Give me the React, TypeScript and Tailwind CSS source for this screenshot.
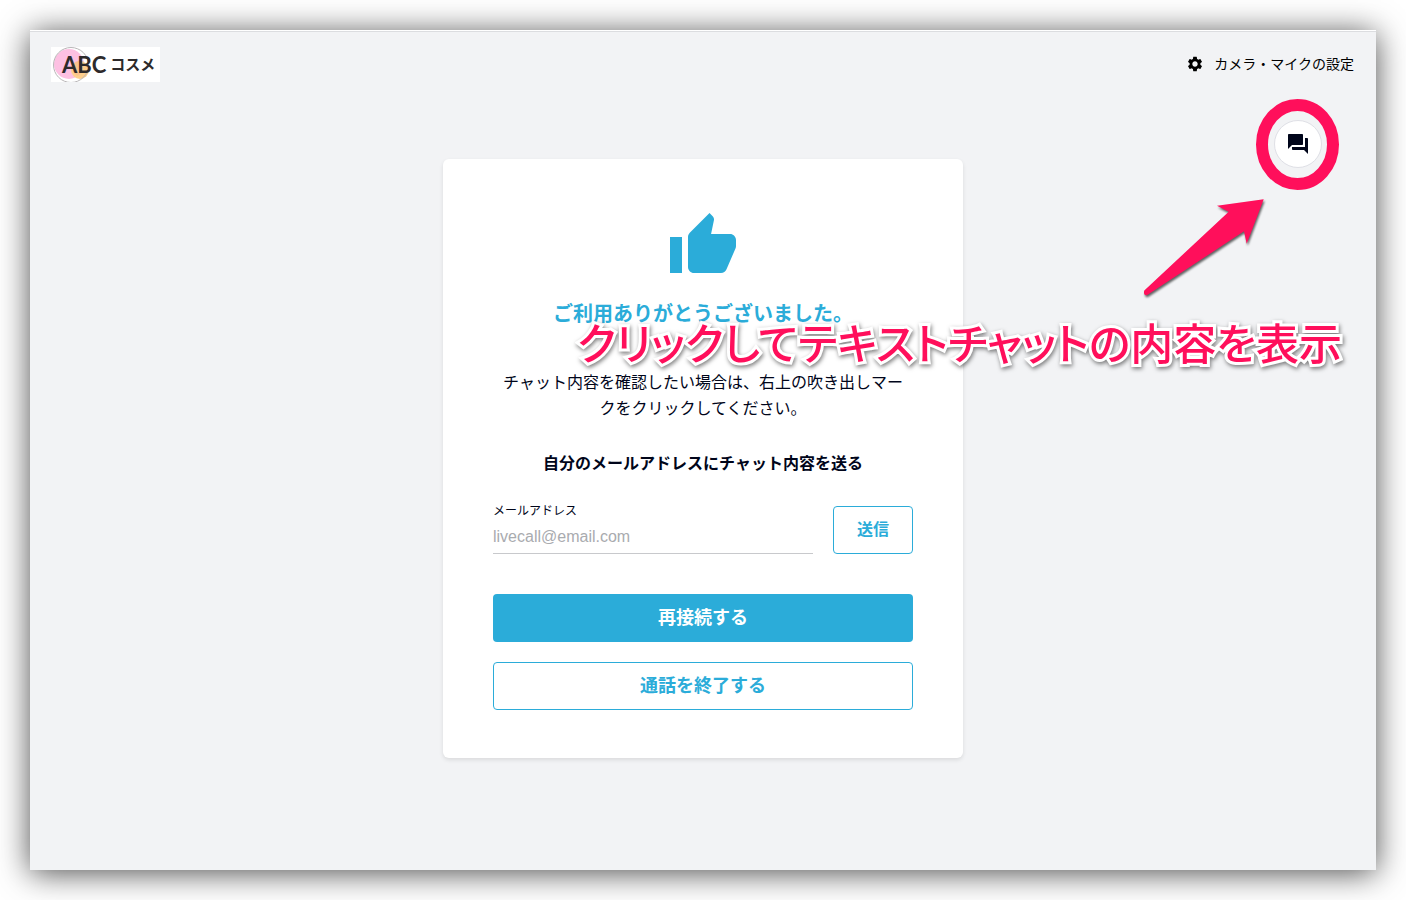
import { useState } from "react";
import { MdForum, MdSettings, MdThumbUp } from "react-icons/md";

function Logo() {
  return (
    <a href="#" className="relative flex h-[35px] w-[109px] items-center gap-1 overflow-hidden bg-white pl-[11px] text-[#2d2a2b]">
      <svg className="absolute left-0 top-0" width="45" height="35" viewBox="0 0 45 35" fill="none" aria-hidden="true">
        <circle cx="18" cy="17" r="15" fill="#fdc0e2" />
        <circle cx="29" cy="23" r="9" fill="#fdce8c" />
        <path d="M22 17a9 9 0 0 1 10 -3a15 15 0 0 1-5 15a9 9 0 0 1-5-12z" fill="#f9b98f" fillOpacity=".6" />
        <circle cx="20" cy="18" r="17.5" stroke="#b9b6b8" />
      </svg>
      <span className="relative font-['Lato',sans-serif] text-[22px] font-bold leading-none">ABC</span>
      <span className="relative pb-[2px] font-['Noto_Sans_CJK_JP',sans-serif] text-[15px] font-bold leading-none">コスメ</span>
    </a>
  );
}

function Header() {
  return (
    <header className="flex items-start justify-between border-t border-[#dcdde0] py-[15px] pl-[21px] pr-[22px]">
      <Logo />
      <button type="button" className="flex h-8 cursor-pointer items-center gap-[10px] text-sm text-black">
        <MdSettings size={18} className="mt-[2px]" />
        カメラ・マイクの設定
      </button>
    </header>
  );
}

function ThanksCard() {
  const [email, setEmail] = useState("");

  return (
    <section className="w-full max-w-[520px] rounded-md bg-white px-[50px] pb-12 pt-[51px] text-center shadow-[0_2px_4px_rgba(0,0,0,0.1)]">
      <MdThumbUp size={72} className="mx-auto text-[#2bacd9]" />
      <h1 className="mt-4 text-xl font-bold leading-[30px] text-[#2bacd9]">ご利用ありがとうございました。</h1>
      <p className="mt-10 px-2 text-base leading-[26px]">
        チャット内容を確認したい場合は、右上の吹き出しマークをクリックしてください。
      </p>
      <h2 className="mt-[30px] text-base font-bold leading-6">自分のメールアドレスにチャット内容を送る</h2>

      <form className="mt-8 flex gap-5" onSubmit={(e) => e.preventDefault()}>
        <div className="flex flex-1 flex-col justify-between border-b border-[#c8c9cc] pb-1 text-left">
          <label htmlFor="email" className="text-xs leading-2">メールアドレス</label>
          <input
            id="email"
            type="email"
            value={email}
            onChange={(e) => setEmail(e.target.value)}
            placeholder="livecall@email.com"
            className="h-6 w-full font-['Liberation_Sans',sans-serif] text-base placeholder:text-[#a9abaf] focus:outline-none"
          />
        </div>
        <button type="submit" className="h-12 w-20 cursor-pointer rounded-[4px] border border-[#2bacd9] pb-1 text-base font-bold text-[#2bacd9]">
          送信
        </button>
      </form>

      <button type="button" className="mt-10 block h-12 w-full cursor-pointer rounded-[4px] bg-[#2bacd9] pb-1 text-lg font-bold text-white">
        再接続する
      </button>
      <button type="button" className="mt-5 block h-12 w-full cursor-pointer rounded-[4px] border border-[#2bacd9] pb-1 text-lg font-bold text-[#2bacd9]">
        通話を終了する
      </button>
    </section>
  );
}

// Ring, arrow and caption pointing at the chat button
function Annotation() {
  return (
    <div className="pointer-events-none absolute right-0 top-0 text-[#ff0f5b]">
      <svg className="absolute right-[37px] top-[68px]" width="83" height="91" viewBox="0 0 83 91" fill="none" aria-hidden="true">
        <ellipse cx="41.5" cy="45.5" rx="35.5" ry="39.5" stroke="currentColor" strokeWidth="12" />
      </svg>
      <svg
        className="absolute right-[100px] top-[159px] drop-shadow-[1px_2px_1px_rgba(0,0,0,0.6)]"
        width="136"
        height="116"
        viewBox="0 0 136 116"
        aria-hidden="true"
      >
        <path
          d="M123.7 9.3L77 15.7L88.7 21.7L4.3 100.5Q3.5 103 4.5 104.5Q6 105.8 8 104.6L104 41.3L106.7 53.7Z"
          fill="currentColor"
        />
      </svg>
      <p className="absolute right-[34px] top-[276px] whitespace-nowrap text-[43px] font-medium leading-[68px] drop-shadow-[1px_2px_2px_rgba(0,0,0,0.5)] [-webkit-text-stroke:6px_white] [font-feature-settings:'palt'] [paint-order:stroke_fill]">
        クリックしてテキストチャットの内容を表示
      </p>
    </div>
  );
}

export default function App() {
  return (
    <div className="flex min-h-screen flex-col bg-white p-[30px] font-['Noto_Sans_CJK_JP',sans-serif] text-[#00051a]">
      <div className="relative flex flex-1 flex-col border-t border-white bg-[#f2f3f5] shadow-[0_3px_30px_rgba(0,0,0,0.7)]">
        <Header />
        <main className="flex flex-1 items-start justify-center pb-8 pt-[62px]">
          <ThanksCard />
        </main>
        <button
          type="button"
          aria-label="チャット"
          className="absolute right-[54px] top-[89px] flex size-12 cursor-pointer items-center justify-center rounded-full border border-[#dfe0e6] bg-white"
        >
          <MdForum size={24} />
        </button>
        <Annotation />
      </div>
    </div>
  );
}
